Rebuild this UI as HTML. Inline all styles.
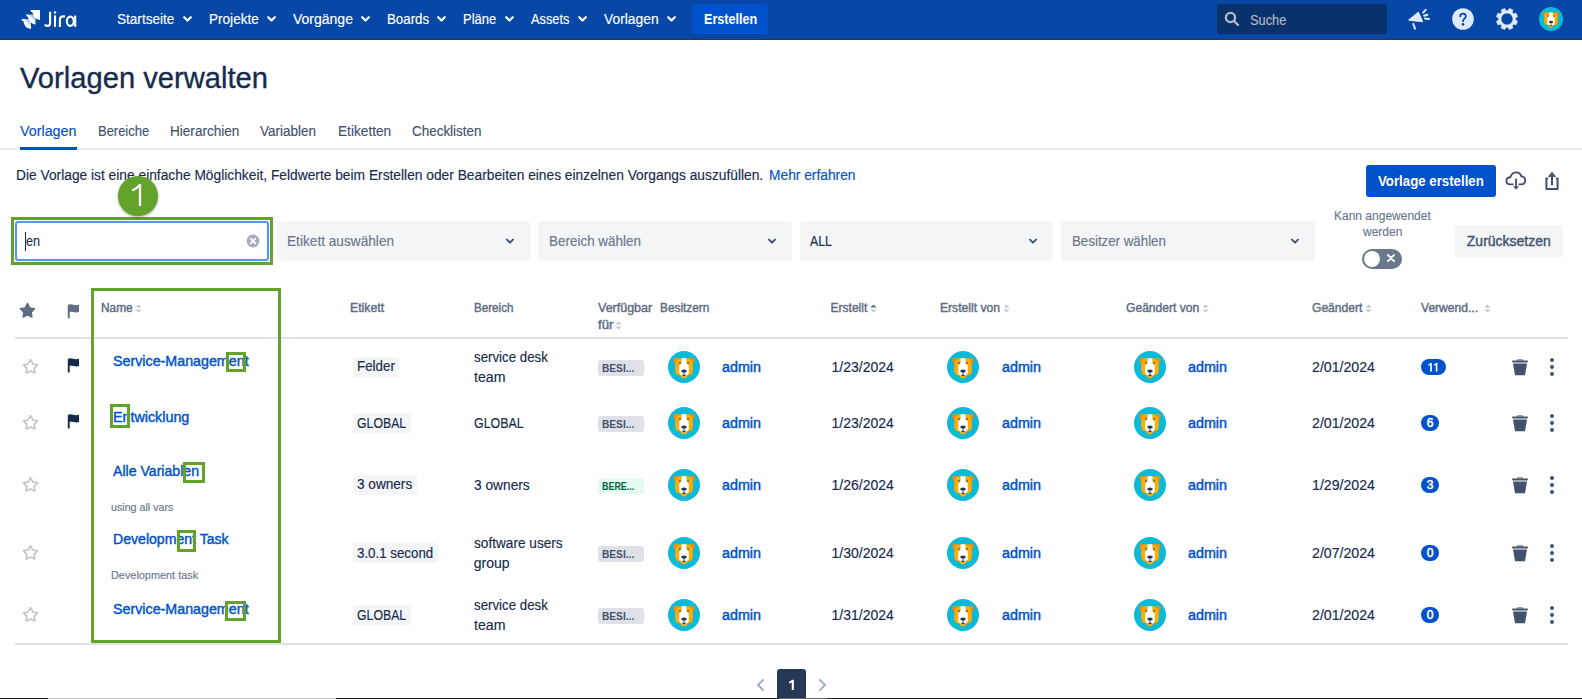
<!DOCTYPE html>
<html><head><meta charset="utf-8"><style>
html,body{margin:0;padding:0;background:#fff;width:1582px;height:699px;overflow:hidden;position:relative;font-family:"Liberation Sans",sans-serif;}
.t{position:absolute;white-space:nowrap;transform-origin:0 0;}
.r{position:absolute;}
svg.r{overflow:visible}
</style></head><body>
<div class="r" style="left:0px;top:0px;width:1582px;height:39px;background:#0747A6;"></div>
<div class="r" style="left:0px;top:39px;width:1582px;height:1px;background:#2f3746;"></div>
<svg class="r" style="left:19px;top:8px" width="24" height="23" viewBox="0 0 24 23">
<defs><linearGradient id="jg" x1="1" y1="0" x2="0.2" y2="0.8"><stop offset="0" stop-color="#fff" stop-opacity="0.25"/><stop offset="0.55" stop-color="#fff"/></linearGradient></defs>
<path fill="#fff" d="M11.3 2 H21 V11.7 Q21 12 20.6 11.9 Q14 11 13.6 4.6 Q12 4.4 11.3 2 Z"/>
<path fill="url(#jg)" d="M6.8 6.5 H16.5 V16.2 Q16.5 16.5 16.1 16.4 Q9.5 15.5 9.1 9.1 Q7.5 8.9 6.8 6.5 Z"/>
<path fill="url(#jg)" d="M2.3 11 H12 V20.7 Q12 21 11.6 20.9 Q5 20 4.6 13.6 Q3 13.4 2.3 11 Z"/>
</svg>
<svg class="r" style="left:0px;top:0px" width="90" height="39" viewBox="0 0 90 39">
<g fill="none" stroke="#fff" stroke-width="2.1">
<path d="M50.1 11.8 V23.2 Q50.1 25.9 47.3 25.9 Q45.6 25.9 44.9 24.6"/>
<path d="M55 15.4 V26.9"/>
<path d="M59.9 26.9 V19.6 Q59.9 16.4 63.6 16.4 H65"/>
<ellipse cx="70.3" cy="21.25" rx="3.45" ry="4.65"/>
<path d="M75.2 15.6 V26.9"/>
</g>
<circle cx="55" cy="12.4" r="1.25" fill="#fff"/>
</svg>
<div class="t" style="left:117.0px;top:12.15px;font-size:14px;line-height:14px;color:#FFFFFF;-webkit-text-stroke:0.15px #FFFFFF;transform:scaleX(0.9689);">Startseite</div>
<svg class="r" style="left:182.8px;top:15px" width="9" height="8" viewBox="0 0 9 8"><path d="M1.2 2.2 L4.5 5.5 L7.8 2.2" fill="none" stroke="#fff" stroke-width="2.2" stroke-linecap="round" stroke-linejoin="round"/></svg>
<div class="t" style="left:209.0px;top:12.15px;font-size:14px;line-height:14px;color:#FFFFFF;-webkit-text-stroke:0.15px #FFFFFF;transform:scaleX(0.9696);">Projekte</div>
<svg class="r" style="left:267.0px;top:15px" width="9" height="8" viewBox="0 0 9 8"><path d="M1.2 2.2 L4.5 5.5 L7.8 2.2" fill="none" stroke="#fff" stroke-width="2.2" stroke-linecap="round" stroke-linejoin="round"/></svg>
<div class="t" style="left:293.0px;top:12.15px;font-size:14px;line-height:14px;color:#FFFFFF;-webkit-text-stroke:0.15px #FFFFFF;">Vorgänge</div>
<svg class="r" style="left:361.2px;top:15px" width="9" height="8" viewBox="0 0 9 8"><path d="M1.2 2.2 L4.5 5.5 L7.8 2.2" fill="none" stroke="#fff" stroke-width="2.2" stroke-linecap="round" stroke-linejoin="round"/></svg>
<div class="t" style="left:386.8px;top:12.15px;font-size:14px;line-height:14px;color:#FFFFFF;-webkit-text-stroke:0.15px #FFFFFF;transform:scaleX(0.9490);">Boards</div>
<svg class="r" style="left:437.4px;top:15px" width="9" height="8" viewBox="0 0 9 8"><path d="M1.2 2.2 L4.5 5.5 L7.8 2.2" fill="none" stroke="#fff" stroke-width="2.2" stroke-linecap="round" stroke-linejoin="round"/></svg>
<div class="t" style="left:463.4px;top:12.15px;font-size:14px;line-height:14px;color:#FFFFFF;-webkit-text-stroke:0.15px #FFFFFF;transform:scaleX(0.9272);">Pläne</div>
<svg class="r" style="left:505.0px;top:15px" width="9" height="8" viewBox="0 0 9 8"><path d="M1.2 2.2 L4.5 5.5 L7.8 2.2" fill="none" stroke="#fff" stroke-width="2.2" stroke-linecap="round" stroke-linejoin="round"/></svg>
<div class="t" style="left:530.8px;top:12.15px;font-size:14px;line-height:14px;color:#FFFFFF;-webkit-text-stroke:0.15px #FFFFFF;transform:scaleX(0.9140);">Assets</div>
<svg class="r" style="left:577.7px;top:15px" width="9" height="8" viewBox="0 0 9 8"><path d="M1.2 2.2 L4.5 5.5 L7.8 2.2" fill="none" stroke="#fff" stroke-width="2.2" stroke-linecap="round" stroke-linejoin="round"/></svg>
<div class="t" style="left:603.6px;top:12.15px;font-size:14px;line-height:14px;color:#FFFFFF;-webkit-text-stroke:0.15px #FFFFFF;transform:scaleX(0.9878);">Vorlagen</div>
<svg class="r" style="left:667.0px;top:15px" width="9" height="8" viewBox="0 0 9 8"><path d="M1.2 2.2 L4.5 5.5 L7.8 2.2" fill="none" stroke="#fff" stroke-width="2.2" stroke-linecap="round" stroke-linejoin="round"/></svg>
<div class="r" style="left:692px;top:4px;width:76px;height:30px;background:#0052CC;border-radius:3px;"></div>
<div class="t" style="left:704.0px;top:12.15px;font-size:14px;line-height:14px;color:#FFFFFF;font-weight:700;transform:scaleX(0.8996);">Erstellen</div>
<div class="r" style="left:1217px;top:4px;width:170px;height:30px;background:#09326C;border-radius:3px;"></div>
<svg class="r" style="left:1224px;top:11px" width="16" height="16" viewBox="0 0 16 16"><circle cx="6.5" cy="6.5" r="4.6" fill="none" stroke="#B3BAC5" stroke-width="2.3"/><path d="M10 10 L14 14" stroke="#B3BAC5" stroke-width="2.4" stroke-linecap="round"/></svg>
<div class="t" style="left:1249.6px;top:13.15px;font-size:14px;line-height:14px;color:#B3BAC5;-webkit-text-stroke:0.15px #B3BAC5;transform:scaleX(0.9144);">Suche</div>
<svg class="r" style="left:1406px;top:7px" width="26" height="24" viewBox="0 0 26 24">
<path d="M3 13 L12.3 5.4 L16.4 14.5 Z" fill="#DEEBFF" stroke="#DEEBFF" stroke-width="1.3" stroke-linejoin="round"/>
<path d="M7.3 17 L9 21.6" stroke="#DEEBFF" stroke-width="2" stroke-linecap="round"/>
<path d="M17.2 5.6 L19.6 2.8 M18.2 8.8 L21.4 7.8 M19 11.6 L23 12" stroke="#DEEBFF" stroke-width="2" stroke-linecap="round"/>
</svg>
<svg class="r" style="left:1452px;top:8px" width="22" height="22" viewBox="0 0 22 22">
<circle cx="11" cy="11" r="10.8" fill="#DEEBFF"/>
<path d="M8.2 8.4 Q8.2 5.6 11 5.6 Q13.8 5.6 13.8 8.3 Q13.8 9.9 12.2 10.9 Q11 11.6 11 13.2" fill="none" stroke="#0747A6" stroke-width="1.75" stroke-linecap="round"/>
<circle cx="11" cy="16.4" r="1.3" fill="#0747A6"/>
</svg>
<svg class="r" style="left:1496px;top:8px" width="22" height="22" viewBox="0 0 22 22">
<path d="M11.78 2.64 L13.39 0.47 L16.76 1.87 L16.36 4.54 L17.46 5.64 L20.13 5.24 L21.53 8.61 L19.36 10.22 L19.36 11.78 L21.53 13.39 L20.13 16.76 L17.46 16.36 L16.36 17.46 L16.76 20.13 L13.39 21.53 L11.78 19.36 L10.22 19.36 L8.61 21.53 L5.24 20.13 L5.64 17.46 L4.54 16.36 L1.87 16.76 L0.47 13.39 L2.64 11.78 L2.64 10.22 L0.47 8.61 L1.87 5.24 L4.54 5.64 L5.64 4.54 L5.24 1.87 L8.61 0.47 L10.22 2.64 Z M11 5 A6 6 0 1 0 11 17 A6 6 0 1 0 11 5 Z" fill="#DEEBFF" fill-rule="evenodd" stroke="#DEEBFF" stroke-width="0.6" stroke-linejoin="round"/>
</svg>
<svg width="0" height="0" style="position:absolute"><defs><symbol id="dog" viewBox="0 0 32 32">
<circle cx="16" cy="16" r="16" fill="#0CB9D6"/>
<ellipse cx="8.2" cy="10" rx="2.5" ry="3.2" fill="#FF8B00" transform="rotate(-25 8.2 10)"/>
<ellipse cx="23.8" cy="10" rx="2.5" ry="3.2" fill="#FF8B00" transform="rotate(25 23.8 10)"/>
<path d="M9.6 7.6 Q16 6.8 22.4 7.6 L24.6 12 L25 19 L23.8 23.2 L19.6 24.8 Q18.6 27.6 16 27.6 Q13.4 27.6 12.4 24.8 L8.2 23.2 L7 19 L7.4 12 Z" fill="#FFAB00"/>
<path d="M13.6 7.2 L18.4 7.2 L18.4 12.2 L20.8 14.6 L20.8 22.6 L18.6 24.4 L13.4 24.4 L11.2 22.6 L11.2 14.6 L13.6 12.2 Z" fill="#FFFFFF"/>
<circle cx="11.9" cy="12" r="1.05" fill="#5E6C84"/><circle cx="20.1" cy="12" r="1.05" fill="#5E6C84"/>
<ellipse cx="16" cy="20" rx="2.8" ry="1.6" fill="#253858"/>
<path d="M16 21 V23.4" stroke="#253858" stroke-width="0.9"/>
<ellipse cx="16" cy="24.2" rx="1.9" ry="0.7" fill="#253858"/>
</symbol>
<symbol id="trash" viewBox="0 0 16 17"><path d="M5.2 0.4 H10.8 Q11.2 0.4 11.2 0.9 V1.6 H4.8 V0.9 Q4.8 0.4 5.2 0.4 Z" fill="#42526E"/><rect x="0" y="1.4" width="16" height="2" rx="1" fill="#42526E"/><path d="M1 4.4 H15 L13 16.2 H3 Z" fill="#42526E"/></symbol>
<symbol id="star0" viewBox="0 0 17 17"><path d="M8.50 1.70 L10.79 5.94 L15.54 6.81 L12.21 10.31 L12.85 15.09 L8.50 13.00 L4.15 15.09 L4.79 10.31 L1.46 6.81 L6.21 5.94 Z" fill="none" stroke="#C6C6C6" stroke-width="1.7" stroke-linejoin="round"/></symbol>
<symbol id="flag" viewBox="0 0 12 15"><path d="M0.8 0.9 Q3.5 -0.1 6.5 0.8 Q9.2 1.6 12 0.7 V8 Q9.2 8.9 6.5 8.1 Q4.2 7.4 2.7 7.8 V13.7 Q2.7 14.6 1.75 14.6 Q0.8 14.6 0.8 13.7 Z" fill="currentColor"/></symbol>
<symbol id="sort" viewBox="0 0 7 9"><path d="M3.5 0.4 L6.6 3.4 H0.4 Z" fill="#C1C7D0"/><path d="M3.5 8.4 L6.6 5.4 H0.4 Z" fill="#C1C7D0"/></symbol>
</defs></svg>
<svg class="r" style="left:1539px;top:7px" width="24" height="24"><use href="#dog"/></svg>
<div class="t" style="left:20.0px;top:62.60px;font-size:30px;line-height:30px;color:#172B4D;-webkit-text-stroke:0.35px #172B4D;transform:scaleX(0.9719);">Vorlagen verwalten</div>
<div class="t" style="left:20.3px;top:124.15px;font-size:14px;line-height:14px;color:#0052CC;-webkit-text-stroke:0.15px #0052CC;transform:scaleX(1.0222);">Vorlagen</div>
<div class="t" style="left:97.7px;top:124.15px;font-size:14px;line-height:14px;color:#42526E;-webkit-text-stroke:0.15px #42526E;transform:scaleX(0.9248);">Bereiche</div>
<div class="t" style="left:170.0px;top:124.15px;font-size:14px;line-height:14px;color:#42526E;-webkit-text-stroke:0.15px #42526E;transform:scaleX(0.9694);">Hierarchien</div>
<div class="t" style="left:260.2px;top:124.15px;font-size:14px;line-height:14px;color:#42526E;-webkit-text-stroke:0.15px #42526E;transform:scaleX(0.9653);">Variablen</div>
<div class="t" style="left:337.7px;top:124.15px;font-size:14px;line-height:14px;color:#42526E;-webkit-text-stroke:0.15px #42526E;transform:scaleX(0.9766);">Etiketten</div>
<div class="t" style="left:411.5px;top:124.15px;font-size:14px;line-height:14px;color:#42526E;-webkit-text-stroke:0.15px #42526E;transform:scaleX(0.9604);">Checklisten</div>
<div class="r" style="left:0px;top:148px;width:1582px;height:2px;background:#EBECF0;"></div>
<div class="r" style="left:20px;top:147px;width:57px;height:3px;background:#0052CC;"></div>
<div class="t" style="left:15.8px;top:168.15px;font-size:14px;line-height:14px;color:#172B4D;-webkit-text-stroke:0.15px #172B4D;transform:scaleX(0.9837);">Die Vorlage ist eine einfache Möglichkeit, Feldwerte beim Erstellen oder Bearbeiten eines einzelnen Vorgangs auszufüllen.</div>
<div class="t" style="left:768.7px;top:168.15px;font-size:14px;line-height:14px;color:#0052CC;-webkit-text-stroke:0.15px #0052CC;transform:scaleX(0.9837);">Mehr erfahren</div>
<div class="r" style="left:1366px;top:165px;width:130px;height:32px;background:#0052CC;border-radius:3px;"></div>
<div class="t" style="left:1378.2px;top:174.15px;font-size:14px;line-height:14px;color:#FFFFFF;font-weight:700;transform:scaleX(0.9464);">Vorlage erstellen</div>
<svg class="r" style="left:1504px;top:170px" width="24" height="22" viewBox="0 0 24 22">
<path d="M9.6 14.4 H6.2 Q2.4 14.4 2.4 10.8 Q2.4 7.2 6.4 7.2 Q8 2.4 12.4 2.4 Q16 2.4 17.2 6.2 Q21.2 6.6 21.2 10.6 Q21.2 14.4 17.2 14.4 H14.6" fill="none" stroke="#42526E" stroke-width="1.9" stroke-linejoin="round"/>
<path d="M12.1 8.6 V18" stroke="#42526E" stroke-width="1.9"/>
<path d="M9.2 16.2 L12.1 19.8 L15 16.2 Z" fill="#42526E"/>
</svg>
<svg class="r" style="left:1543px;top:170px" width="18" height="22" viewBox="0 0 18 22">
<path d="M5 8.6 H3.4 V19 H14.6 V8.6 H13" fill="none" stroke="#42526E" stroke-width="2" stroke-linejoin="round"/>
<path d="M9 4 V15.2" stroke="#42526E" stroke-width="2"/>
<path d="M5.4 6.6 L9 2.2 L12.6 6.6 Z" fill="#42526E" stroke="#42526E" stroke-width="0.8" stroke-linejoin="round"/>
</svg>
<div class="r" style="left:15px;top:221px;width:254px;height:40px;background:#FFFFFF;box-sizing:border-box;border:2px solid #4C9AFF;border-radius:3px;"></div>
<div class="r" style="left:25px;top:232px;width:1px;height:19px;background:#172B4D;"></div>
<div class="t" style="left:25.9px;top:234.45px;font-size:14px;line-height:14px;color:#172B4D;-webkit-text-stroke:0.15px #172B4D;transform:scaleX(0.8990);">en</div>
<svg class="r" style="left:246px;top:234px" width="14" height="14" viewBox="0 0 14 14"><circle cx="7" cy="7" r="6.4" fill="#A5ADBA"/><path d="M4.6 4.6 L9.4 9.4 M9.4 4.6 L4.6 9.4" stroke="#fff" stroke-width="1.6" stroke-linecap="round"/></svg>
<div class="r" style="left:277px;top:221px;width:253px;height:40px;background:#F4F5F7;border-radius:3px;"></div>
<div class="t" style="left:286.8px;top:234.15px;font-size:14px;line-height:14px;color:#6B778C;-webkit-text-stroke:0.15px #6B778C;transform:scaleX(0.9760);">Etikett auswählen</div>
<svg class="r" style="left:504.8px;top:236px" width="10" height="10" viewBox="0 0 10 10"><path d="M2 3.6 L5 6.6 L8 3.6" fill="none" stroke="#42526E" stroke-width="2" stroke-linecap="round" stroke-linejoin="round"/></svg>
<div class="r" style="left:538px;top:221px;width:254px;height:40px;background:#F4F5F7;border-radius:3px;"></div>
<div class="t" style="left:548.8px;top:234.15px;font-size:14px;line-height:14px;color:#6B778C;-webkit-text-stroke:0.15px #6B778C;transform:scaleX(0.9611);">Bereich wählen</div>
<svg class="r" style="left:766.8px;top:236px" width="10" height="10" viewBox="0 0 10 10"><path d="M2 3.6 L5 6.6 L8 3.6" fill="none" stroke="#42526E" stroke-width="2" stroke-linecap="round" stroke-linejoin="round"/></svg>
<div class="r" style="left:800px;top:221px;width:253px;height:40px;background:#F4F5F7;border-radius:3px;"></div>
<div class="t" style="left:810.3px;top:234.15px;font-size:14px;line-height:14px;color:#172B4D;-webkit-text-stroke:0.15px #172B4D;transform:scaleX(0.8791);">ALL</div>
<svg class="r" style="left:1027.8px;top:236px" width="10" height="10" viewBox="0 0 10 10"><path d="M2 3.6 L5 6.6 L8 3.6" fill="none" stroke="#42526E" stroke-width="2" stroke-linecap="round" stroke-linejoin="round"/></svg>
<div class="r" style="left:1061px;top:221px;width:254px;height:40px;background:#F4F5F7;border-radius:3px;"></div>
<div class="t" style="left:1072.2px;top:234.15px;font-size:14px;line-height:14px;color:#6B778C;-webkit-text-stroke:0.15px #6B778C;transform:scaleX(0.9501);">Besitzer wählen</div>
<svg class="r" style="left:1290.0px;top:236px" width="10" height="10" viewBox="0 0 10 10"><path d="M2 3.6 L5 6.6 L8 3.6" fill="none" stroke="#42526E" stroke-width="2" stroke-linecap="round" stroke-linejoin="round"/></svg>
<div class="t" style="left:1334.0px;top:209.84px;font-size:12px;line-height:12px;color:#6B778C;-webkit-text-stroke:0.15px #6B778C;">Kann angewendet</div>
<div class="t" style="left:1363.0px;top:226.34px;font-size:12px;line-height:12px;color:#6B778C;-webkit-text-stroke:0.15px #6B778C;">werden</div>
<div class="r" style="left:1362px;top:249px;width:40px;height:20px;background:#6B778C;border-radius:10px;"></div>
<div class="r" style="left:1364px;top:251px;width:16px;height:16px;border-radius:8px;background:#fff"></div>
<svg class="r" style="left:1385px;top:252px" width="12" height="12" viewBox="0 0 12 12"><path d="M3 3 L9 9 M9 3 L3 9" stroke="#fff" stroke-width="1.8" stroke-linecap="round"/></svg>
<div class="r" style="left:1455px;top:225px;width:108px;height:32px;background:#F4F5F7;border-radius:3px;"></div>
<div class="t" style="left:1466.8px;top:234.15px;font-size:14px;line-height:14px;color:#42526E;-webkit-text-stroke:0.4px #42526E;">Zurücksetzen</div>
<svg class="r" style="left:18.5px;top:302px" width="17" height="17" viewBox="0 0 17 17"><path d="M8.50 1.40 L10.79 5.84 L15.73 6.65 L12.21 10.21 L12.97 15.15 L8.50 12.90 L4.03 15.15 L4.79 10.21 L1.27 6.65 L6.21 5.84 Z" fill="#5E6C84" stroke="#5E6C84" stroke-width="1.3" stroke-linejoin="round"/></svg>
<svg class="r" style="left:67px;top:303.5px;color:#5E6C84" width="12" height="15"><use href="#flag"/></svg>
<div class="t" style="left:101.3px;top:301.84px;font-size:12px;line-height:12px;color:#5E6C84;-webkit-text-stroke:0.42px #5E6C84;transform:scaleX(0.9903);">Name</div>
<svg class="r" style="left:135px;top:303.6px" width="7" height="9"><use href="#sort"/></svg>
<div class="t" style="left:349.5px;top:301.84px;font-size:12px;line-height:12px;color:#5E6C84;-webkit-text-stroke:0.42px #5E6C84;transform:scaleX(1.0226);">Etikett</div>
<div class="t" style="left:473.6px;top:301.84px;font-size:12px;line-height:12px;color:#5E6C84;-webkit-text-stroke:0.42px #5E6C84;transform:scaleX(0.9683);">Bereich</div>
<div class="t" style="left:597.5px;top:301.84px;font-size:12px;line-height:12px;color:#5E6C84;-webkit-text-stroke:0.42px #5E6C84;transform:scaleX(1.0396);">Verfügbar</div>
<div class="t" style="left:597.5px;top:318.84px;font-size:12px;line-height:12px;color:#5E6C84;-webkit-text-stroke:0.42px #5E6C84;transform:scaleX(1.1068);">für</div>
<svg class="r" style="left:615px;top:320.6px" width="7" height="9"><use href="#sort"/></svg>
<div class="t" style="left:660.0px;top:301.84px;font-size:12px;line-height:12px;color:#5E6C84;-webkit-text-stroke:0.42px #5E6C84;transform:scaleX(0.9855);">Besitzern</div>
<div class="t" style="left:830.6px;top:301.84px;font-size:12px;line-height:12px;color:#5E6C84;-webkit-text-stroke:0.42px #5E6C84;">Erstellt</div>
<svg class="r" style="left:870px;top:303.6px" width="7" height="9" viewBox="0 0 7 9"><path d="M3.5 0.4 L6.6 3.4 H0.4 Z" fill="#5E6C84"/><path d="M3.5 8.4 L6.6 5.4 H0.4 Z" fill="#C1C7D0"/></svg>
<div class="t" style="left:939.6px;top:301.84px;font-size:12px;line-height:12px;color:#5E6C84;-webkit-text-stroke:0.42px #5E6C84;transform:scaleX(1.0092);">Erstellt von</div>
<svg class="r" style="left:1002.6px;top:303.6px" width="7" height="9"><use href="#sort"/></svg>
<div class="t" style="left:1126.0px;top:301.84px;font-size:12px;line-height:12px;color:#5E6C84;-webkit-text-stroke:0.42px #5E6C84;transform:scaleX(1.0080);">Geändert von</div>
<svg class="r" style="left:1202px;top:303.6px" width="7" height="9"><use href="#sort"/></svg>
<div class="t" style="left:1312.0px;top:301.84px;font-size:12px;line-height:12px;color:#5E6C84;-webkit-text-stroke:0.42px #5E6C84;transform:scaleX(1.0053);">Geändert</div>
<svg class="r" style="left:1365px;top:303.6px" width="7" height="9"><use href="#sort"/></svg>
<div class="t" style="left:1420.9px;top:301.84px;font-size:12px;line-height:12px;color:#5E6C84;-webkit-text-stroke:0.42px #5E6C84;transform:scaleX(1.0052);">Verwend...</div>
<svg class="r" style="left:1484px;top:303.6px" width="7" height="9"><use href="#sort"/></svg>
<div class="r" style="left:15px;top:337px;width:1553px;height:2px;background:#DFE1E6;"></div>
<div class="r" style="left:15px;top:643px;width:1553px;height:2px;background:#DFE1E6;"></div>
<svg class="r" style="left:21.5px;top:358.3px" width="17" height="17"><use href="#star0"/></svg>
<svg class="r" style="left:67px;top:358.4px;color:#172B4D" width="12" height="15"><use href="#flag"/></svg>
<div class="t" style="left:113.3px;top:354.35px;font-size:14px;line-height:14px;color:#0052CC;-webkit-text-stroke:0.42px #0052CC;transform:scaleX(1.0190);">Service-Management</div>
<div class="r" style="left:353px;top:357px;width:46px;height:20px;background:#F4F5F7;border-radius:3px;"></div>
<div class="t" style="left:357.3px;top:359.15px;font-size:14px;line-height:14px;color:#172B4D;-webkit-text-stroke:0.15px #172B4D;transform:scaleX(0.9550);">Felder</div>
<div class="t" style="left:473.6px;top:350.15px;font-size:14px;line-height:14px;color:#172B4D;-webkit-text-stroke:0.15px #172B4D;transform:scaleX(0.9485);">service desk</div>
<div class="t" style="left:473.6px;top:370.15px;font-size:14px;line-height:14px;color:#172B4D;-webkit-text-stroke:0.15px #172B4D;transform:scaleX(1.0088);">team</div>
<div class="r" style="left:598px;top:360px;width:46px;height:16px;background:#DFE1E6;border-radius:3px;"></div>
<div class="t" style="left:602.0px;top:362.69px;font-size:11px;line-height:11px;color:#42526E;font-weight:700;transform:scaleX(0.9242);">BESI...</div>
<svg class="r" style="left:668px;top:351px" width="32" height="32"><use href="#dog"/></svg>
<div class="t" style="left:722.4px;top:360.15px;font-size:14px;line-height:14px;color:#0052CC;-webkit-text-stroke:0.45px #0052CC;transform:scaleX(1.0201);">admin</div>
<svg class="r" style="left:947px;top:351px" width="32" height="32"><use href="#dog"/></svg>
<div class="t" style="left:1002.0px;top:360.15px;font-size:14px;line-height:14px;color:#0052CC;-webkit-text-stroke:0.45px #0052CC;transform:scaleX(1.0227);">admin</div>
<svg class="r" style="left:1134px;top:351px" width="32" height="32"><use href="#dog"/></svg>
<div class="t" style="left:1188.0px;top:360.15px;font-size:14px;line-height:14px;color:#0052CC;-webkit-text-stroke:0.45px #0052CC;transform:scaleX(1.0227);">admin</div>
<div class="t" style="left:831.5px;top:360.15px;font-size:14px;line-height:14px;color:#172B4D;-webkit-text-stroke:0.15px #172B4D;">1/23/2024</div>
<div class="t" style="left:1312.0px;top:360.15px;font-size:14px;line-height:14px;color:#172B4D;-webkit-text-stroke:0.15px #172B4D;transform:scaleX(1.0115);">2/01/2024</div>
<div class="r" style="left:1421px;top:359px;width:25px;height:16px;background:#0052CC;border-radius:8px;"></div>
<svg class="r" style="left:1421px;top:359px" width="25" height="16" viewBox="0 0 25 16"><path d="M10 4.2 V12.6 M15.6 4.2 V12.6" stroke="#fff" stroke-width="1.7"/><path d="M10.3 4.3 Q9.2 5.6 7.4 6.1 M15.9 4.3 Q14.8 5.6 13 6.1" fill="none" stroke="#fff" stroke-width="1.4"/></svg>
<svg class="r" style="left:1512px;top:358.7px" width="16" height="17"><use href="#trash"/></svg>
<div class="r" style="left:1550px;top:358px;width:4px;height:4px;background:#42526E;border-radius:2px;"></div>
<div class="r" style="left:1550px;top:365px;width:4px;height:4px;background:#42526E;border-radius:2px;"></div>
<div class="r" style="left:1550px;top:372px;width:4px;height:4px;background:#42526E;border-radius:2px;"></div>
<svg class="r" style="left:21.5px;top:414.3px" width="17" height="17"><use href="#star0"/></svg>
<svg class="r" style="left:67px;top:414.4px;color:#172B4D" width="12" height="15"><use href="#flag"/></svg>
<div class="t" style="left:113.3px;top:410.25px;font-size:14px;line-height:14px;color:#0052CC;-webkit-text-stroke:0.42px #0052CC;transform:scaleX(1.0213);">Entwicklung</div>
<div class="r" style="left:353px;top:413px;width:58px;height:20px;background:#F4F5F7;border-radius:3px;"></div>
<div class="t" style="left:357.3px;top:415.65px;font-size:14px;line-height:14px;color:#172B4D;-webkit-text-stroke:0.15px #172B4D;transform:scaleX(0.8781);">GLOBAL</div>
<div class="t" style="left:473.8px;top:416.15px;font-size:14px;line-height:14px;color:#172B4D;-webkit-text-stroke:0.15px #172B4D;transform:scaleX(0.8870);">GLOBAL</div>
<div class="r" style="left:598px;top:416px;width:46px;height:16px;background:#DFE1E6;border-radius:3px;"></div>
<div class="t" style="left:602.0px;top:418.69px;font-size:11px;line-height:11px;color:#42526E;font-weight:700;transform:scaleX(0.9242);">BESI...</div>
<svg class="r" style="left:668px;top:407px" width="32" height="32"><use href="#dog"/></svg>
<div class="t" style="left:722.4px;top:416.15px;font-size:14px;line-height:14px;color:#0052CC;-webkit-text-stroke:0.45px #0052CC;transform:scaleX(1.0201);">admin</div>
<svg class="r" style="left:947px;top:407px" width="32" height="32"><use href="#dog"/></svg>
<div class="t" style="left:1002.0px;top:416.15px;font-size:14px;line-height:14px;color:#0052CC;-webkit-text-stroke:0.45px #0052CC;transform:scaleX(1.0227);">admin</div>
<svg class="r" style="left:1134px;top:407px" width="32" height="32"><use href="#dog"/></svg>
<div class="t" style="left:1188.0px;top:416.15px;font-size:14px;line-height:14px;color:#0052CC;-webkit-text-stroke:0.45px #0052CC;transform:scaleX(1.0227);">admin</div>
<div class="t" style="left:831.5px;top:416.15px;font-size:14px;line-height:14px;color:#172B4D;-webkit-text-stroke:0.15px #172B4D;">1/23/2024</div>
<div class="t" style="left:1312.0px;top:416.15px;font-size:14px;line-height:14px;color:#172B4D;-webkit-text-stroke:0.15px #172B4D;transform:scaleX(1.0115);">2/01/2024</div>
<div class="r" style="left:1421px;top:415px;width:18px;height:16px;background:#0052CC;border-radius:8px;"></div>
<div class="t" style="left:1421px;top:415px;width:18px;height:16px;line-height:16px;font-size:12px;color:#fff;text-align:center;-webkit-text-stroke:0.5px #fff">6</div>
<svg class="r" style="left:1512px;top:414.7px" width="16" height="17"><use href="#trash"/></svg>
<div class="r" style="left:1550px;top:414px;width:4px;height:4px;background:#42526E;border-radius:2px;"></div>
<div class="r" style="left:1550px;top:421px;width:4px;height:4px;background:#42526E;border-radius:2px;"></div>
<div class="r" style="left:1550px;top:428px;width:4px;height:4px;background:#42526E;border-radius:2px;"></div>
<svg class="r" style="left:21.5px;top:476.3px" width="17" height="17"><use href="#star0"/></svg>
<div class="t" style="left:113.3px;top:464.35px;font-size:14px;line-height:14px;color:#0052CC;-webkit-text-stroke:0.42px #0052CC;transform:scaleX(1.0076);">Alle Variablen</div>
<div class="t" style="left:110.8px;top:501.69px;font-size:11px;line-height:11px;color:#6B778C;-webkit-text-stroke:0.15px #6B778C;transform:scaleX(0.9704);">using all vars</div>
<div class="r" style="left:353px;top:475px;width:64px;height:19.5px;background:#F4F5F7;border-radius:3px;"></div>
<div class="t" style="left:357.3px;top:477.35px;font-size:14px;line-height:14px;color:#172B4D;-webkit-text-stroke:0.15px #172B4D;transform:scaleX(0.9717);">3 owners</div>
<div class="t" style="left:473.8px;top:477.65px;font-size:14px;line-height:14px;color:#172B4D;-webkit-text-stroke:0.15px #172B4D;transform:scaleX(0.9805);">3 owners</div>
<div class="r" style="left:598px;top:478px;width:46px;height:16px;background:#E3FCEF;border-radius:3px;"></div>
<div class="t" style="left:602.0px;top:480.69px;font-size:11px;line-height:11px;color:#006644;font-weight:700;transform:scaleX(0.8105);">BERE...</div>
<svg class="r" style="left:668px;top:469px" width="32" height="32"><use href="#dog"/></svg>
<div class="t" style="left:722.4px;top:478.15px;font-size:14px;line-height:14px;color:#0052CC;-webkit-text-stroke:0.45px #0052CC;transform:scaleX(1.0201);">admin</div>
<svg class="r" style="left:947px;top:469px" width="32" height="32"><use href="#dog"/></svg>
<div class="t" style="left:1002.0px;top:478.15px;font-size:14px;line-height:14px;color:#0052CC;-webkit-text-stroke:0.45px #0052CC;transform:scaleX(1.0227);">admin</div>
<svg class="r" style="left:1134px;top:469px" width="32" height="32"><use href="#dog"/></svg>
<div class="t" style="left:1188.0px;top:478.15px;font-size:14px;line-height:14px;color:#0052CC;-webkit-text-stroke:0.45px #0052CC;transform:scaleX(1.0227);">admin</div>
<div class="t" style="left:831.5px;top:478.15px;font-size:14px;line-height:14px;color:#172B4D;-webkit-text-stroke:0.15px #172B4D;">1/26/2024</div>
<div class="t" style="left:1312.0px;top:478.15px;font-size:14px;line-height:14px;color:#172B4D;-webkit-text-stroke:0.15px #172B4D;transform:scaleX(1.0115);">1/29/2024</div>
<div class="r" style="left:1421px;top:477px;width:18px;height:16px;background:#0052CC;border-radius:8px;"></div>
<div class="t" style="left:1421px;top:477px;width:18px;height:16px;line-height:16px;font-size:12px;color:#fff;text-align:center;-webkit-text-stroke:0.5px #fff">3</div>
<svg class="r" style="left:1512px;top:476.7px" width="16" height="17"><use href="#trash"/></svg>
<div class="r" style="left:1550px;top:476px;width:4px;height:4px;background:#42526E;border-radius:2px;"></div>
<div class="r" style="left:1550px;top:483px;width:4px;height:4px;background:#42526E;border-radius:2px;"></div>
<div class="r" style="left:1550px;top:490px;width:4px;height:4px;background:#42526E;border-radius:2px;"></div>
<svg class="r" style="left:21.5px;top:544.3px" width="17" height="17"><use href="#star0"/></svg>
<div class="t" style="left:113.3px;top:532.05px;font-size:14px;line-height:14px;color:#0052CC;-webkit-text-stroke:0.42px #0052CC;transform:scaleX(1.0060);">Development Task</div>
<div class="t" style="left:110.8px;top:569.69px;font-size:11px;line-height:11px;color:#6B778C;-webkit-text-stroke:0.15px #6B778C;transform:scaleX(0.9893);">Development task</div>
<div class="r" style="left:353px;top:543px;width:85px;height:19.5px;background:#F4F5F7;border-radius:3px;"></div>
<div class="t" style="left:357.3px;top:545.65px;font-size:14px;line-height:14px;color:#172B4D;-webkit-text-stroke:0.15px #172B4D;transform:scaleX(0.9504);">3.0.1 second</div>
<div class="t" style="left:473.8px;top:536.35px;font-size:14px;line-height:14px;color:#172B4D;-webkit-text-stroke:0.15px #172B4D;transform:scaleX(0.9743);">software users</div>
<div class="t" style="left:473.8px;top:556.35px;font-size:14px;line-height:14px;color:#172B4D;-webkit-text-stroke:0.15px #172B4D;">group</div>
<div class="r" style="left:598px;top:546px;width:46px;height:16px;background:#DFE1E6;border-radius:3px;"></div>
<div class="t" style="left:602.0px;top:548.69px;font-size:11px;line-height:11px;color:#42526E;font-weight:700;transform:scaleX(0.9242);">BESI...</div>
<svg class="r" style="left:668px;top:537px" width="32" height="32"><use href="#dog"/></svg>
<div class="t" style="left:722.4px;top:546.15px;font-size:14px;line-height:14px;color:#0052CC;-webkit-text-stroke:0.45px #0052CC;transform:scaleX(1.0201);">admin</div>
<svg class="r" style="left:947px;top:537px" width="32" height="32"><use href="#dog"/></svg>
<div class="t" style="left:1002.0px;top:546.15px;font-size:14px;line-height:14px;color:#0052CC;-webkit-text-stroke:0.45px #0052CC;transform:scaleX(1.0227);">admin</div>
<svg class="r" style="left:1134px;top:537px" width="32" height="32"><use href="#dog"/></svg>
<div class="t" style="left:1188.0px;top:546.15px;font-size:14px;line-height:14px;color:#0052CC;-webkit-text-stroke:0.45px #0052CC;transform:scaleX(1.0227);">admin</div>
<div class="t" style="left:831.5px;top:546.15px;font-size:14px;line-height:14px;color:#172B4D;-webkit-text-stroke:0.15px #172B4D;">1/30/2024</div>
<div class="t" style="left:1312.0px;top:546.15px;font-size:14px;line-height:14px;color:#172B4D;-webkit-text-stroke:0.15px #172B4D;transform:scaleX(1.0115);">2/07/2024</div>
<div class="r" style="left:1421px;top:545px;width:18px;height:16px;background:#0052CC;border-radius:8px;"></div>
<div class="t" style="left:1421px;top:545px;width:18px;height:16px;line-height:16px;font-size:12px;color:#fff;text-align:center;-webkit-text-stroke:0.5px #fff">0</div>
<svg class="r" style="left:1512px;top:544.7px" width="16" height="17"><use href="#trash"/></svg>
<div class="r" style="left:1550px;top:544px;width:4px;height:4px;background:#42526E;border-radius:2px;"></div>
<div class="r" style="left:1550px;top:551px;width:4px;height:4px;background:#42526E;border-radius:2px;"></div>
<div class="r" style="left:1550px;top:558px;width:4px;height:4px;background:#42526E;border-radius:2px;"></div>
<svg class="r" style="left:21.5px;top:606.3px" width="17" height="17"><use href="#star0"/></svg>
<div class="t" style="left:113.3px;top:602.35px;font-size:14px;line-height:14px;color:#0052CC;-webkit-text-stroke:0.42px #0052CC;transform:scaleX(1.0190);">Service-Management</div>
<div class="r" style="left:353px;top:605px;width:58px;height:20px;background:#F4F5F7;border-radius:3px;"></div>
<div class="t" style="left:357.3px;top:607.65px;font-size:14px;line-height:14px;color:#172B4D;-webkit-text-stroke:0.15px #172B4D;transform:scaleX(0.8781);">GLOBAL</div>
<div class="t" style="left:473.6px;top:598.15px;font-size:14px;line-height:14px;color:#172B4D;-webkit-text-stroke:0.15px #172B4D;transform:scaleX(0.9485);">service desk</div>
<div class="t" style="left:473.6px;top:618.15px;font-size:14px;line-height:14px;color:#172B4D;-webkit-text-stroke:0.15px #172B4D;transform:scaleX(1.0088);">team</div>
<div class="r" style="left:598px;top:608px;width:46px;height:16px;background:#DFE1E6;border-radius:3px;"></div>
<div class="t" style="left:602.0px;top:610.69px;font-size:11px;line-height:11px;color:#42526E;font-weight:700;transform:scaleX(0.9242);">BESI...</div>
<svg class="r" style="left:668px;top:599px" width="32" height="32"><use href="#dog"/></svg>
<div class="t" style="left:722.4px;top:608.15px;font-size:14px;line-height:14px;color:#0052CC;-webkit-text-stroke:0.45px #0052CC;transform:scaleX(1.0201);">admin</div>
<svg class="r" style="left:947px;top:599px" width="32" height="32"><use href="#dog"/></svg>
<div class="t" style="left:1002.0px;top:608.15px;font-size:14px;line-height:14px;color:#0052CC;-webkit-text-stroke:0.45px #0052CC;transform:scaleX(1.0227);">admin</div>
<svg class="r" style="left:1134px;top:599px" width="32" height="32"><use href="#dog"/></svg>
<div class="t" style="left:1188.0px;top:608.15px;font-size:14px;line-height:14px;color:#0052CC;-webkit-text-stroke:0.45px #0052CC;transform:scaleX(1.0227);">admin</div>
<div class="t" style="left:831.5px;top:608.15px;font-size:14px;line-height:14px;color:#172B4D;-webkit-text-stroke:0.15px #172B4D;">1/31/2024</div>
<div class="t" style="left:1312.0px;top:608.15px;font-size:14px;line-height:14px;color:#172B4D;-webkit-text-stroke:0.15px #172B4D;transform:scaleX(1.0115);">2/01/2024</div>
<div class="r" style="left:1421px;top:607px;width:18px;height:16px;background:#0052CC;border-radius:8px;"></div>
<div class="t" style="left:1421px;top:607px;width:18px;height:16px;line-height:16px;font-size:12px;color:#fff;text-align:center;-webkit-text-stroke:0.5px #fff">0</div>
<svg class="r" style="left:1512px;top:606.7px" width="16" height="17"><use href="#trash"/></svg>
<div class="r" style="left:1550px;top:606px;width:4px;height:4px;background:#42526E;border-radius:2px;"></div>
<div class="r" style="left:1550px;top:613px;width:4px;height:4px;background:#42526E;border-radius:2px;"></div>
<div class="r" style="left:1550px;top:620px;width:4px;height:4px;background:#42526E;border-radius:2px;"></div>
<div class="r" style="left:11px;top:217px;width:262px;height:48px;box-sizing:border-box;border:3px solid #62A329"></div>
<div class="r" style="left:91px;top:288px;width:190px;height:355px;box-sizing:border-box;border:3px solid #62A329"></div>
<div class="r" style="left:226px;top:352px;width:20px;height:20px;box-sizing:border-box;border:3px solid #62A329"></div>
<div class="r" style="left:110px;top:404px;width:20px;height:24px;box-sizing:border-box;border:3px solid #62A329"></div>
<div class="r" style="left:183px;top:462px;width:22px;height:21px;box-sizing:border-box;border:3px solid #62A329"></div>
<div class="r" style="left:177px;top:530px;width:19px;height:22px;box-sizing:border-box;border:3px solid #62A329"></div>
<div class="r" style="left:225px;top:601px;width:21px;height:20px;box-sizing:border-box;border:3px solid #62A329"></div>
<div class="r" style="left:118px;top:176px;width:40px;height:40px;border-radius:20px;background:#62A329;box-shadow:0 1px 3px rgba(0,0,0,0.35)"></div>
<svg class="r" style="left:118px;top:176px" width="40" height="40" viewBox="0 0 40 40"><path d="M22 8.2 V30" stroke="#fff" stroke-width="2.3"/><path d="M22.2 8.4 Q19 12.6 14.2 14.4" fill="none" stroke="#fff" stroke-width="2.1"/></svg>
<svg class="r" style="left:755px;top:676.5px" width="12" height="16" viewBox="0 0 12 16"><path d="M8.6 2.4 L3 8 L8.6 13.6" fill="none" stroke="#A5ADBA" stroke-width="2"/></svg>
<div class="r" style="left:777px;top:669px;width:29px;height:30px;background:#253858;border-radius:3px 3px 0 0;"></div>
<svg class="r" style="left:786px;top:678px" width="12" height="14" viewBox="0 0 12 14"><path d="M6.8 2 V12" stroke="#fff" stroke-width="2.1"/><path d="M7.4 2.2 Q5.6 4 3.2 4.6" fill="none" stroke="#fff" stroke-width="1.8"/></svg>
<svg class="r" style="left:816px;top:676.5px" width="12" height="16" viewBox="0 0 12 16"><path d="M3.4 2.4 L9 8 L3.4 13.6" fill="none" stroke="#A5ADBA" stroke-width="2"/></svg>
<div class="r" style="left:0px;top:698px;width:1582px;height:1px;background:#1d1d1d;"></div>
<div class="r" style="left:48px;top:698px;width:288px;height:1px;background:#bdbdbd;"></div>
<div class="r" style="left:779px;top:698px;width:48px;height:1px;background:#666;"></div>
</body></html>
